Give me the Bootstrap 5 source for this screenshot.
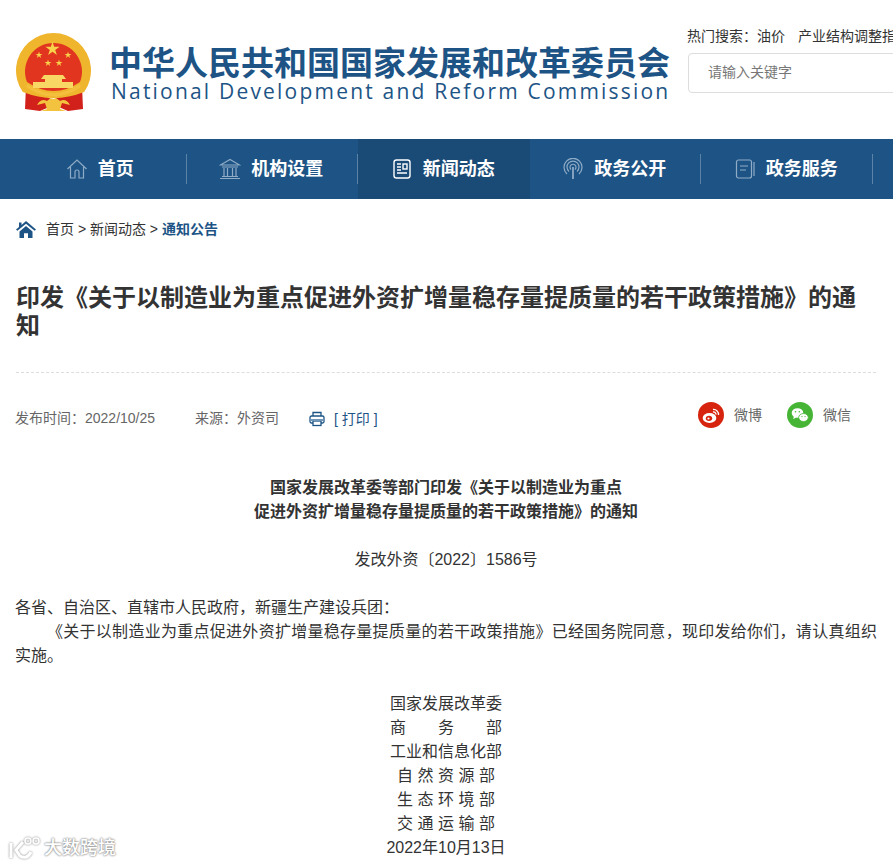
<!DOCTYPE html>
<html lang="zh-CN">
<head>
    <meta charset="UTF-8">
    <meta name="viewport" content="width=device-width, initial-scale=1.0">
    <title>印发《关于以制造业为重点促进外资扩增量稳存量提质量的若干政策措施》的通知</title>
    <link href="https://cdn.jsdelivr.net/npm/bootstrap@5.3.3/dist/css/bootstrap.min.css" rel="stylesheet">
    <style>
        html, body { height: 865px; overflow: hidden; }
        body {
            font-family: "Liberation Sans", "Noto Sans CJK SC", sans-serif;
            color: #333;
            font-size: 16px;
            line-height: 24px;
            position: relative;
        }
        /* top header */
        .site-head { height: 139px; padding-left: 15px; }
        .emblem { width: 76px; height: 80px; margin: 32px 0 0 1px; flex: none; }
        .site-name { margin-left: 17px; margin-top: 47px; width: 564px; flex: none; color: #1d5485; }
        .site-cn { font-size: 33px; line-height: 34px; font-weight: 700; white-space: nowrap; }
        .site-en { font-family: "Open Sans", sans-serif; font-size: 21px; line-height: 18px; letter-spacing: 2.2px; white-space: nowrap; margin-left: 2px; margin-top: 1px; }
        .site-search { margin-left: 14px; width: 320px; flex: none; padding-top: 24px; }
        .hot-words { font-size: 14px; line-height: 24px; white-space: nowrap; }
        .hot-words span { margin-right: 13px; }
        .search-box { margin: 5px 0 0 1px; height: 40px; font-size: 14px; padding: 0 0 2px 19px; border-color: #ddd; border-radius: 4px; font-family: inherit; }
        .search-box::placeholder { color: #777; }
        /* main nav */
        .main-nav { height: 60px; background: #1d5485; padding-left: 15px; }
        .nav-cell { width: 171.5px; flex: none; height: 60px; position: relative; color: #fff; font-size: 18px; font-weight: 700; gap: 10px; padding-right: 2px; }
        .nav-cell svg { width: 22px; height: 22px; flex: none; color: #8fabc6; }
        .nav-cell::after { content: ""; position: absolute; right: 0; top: 15px; height: 30px; width: 1px; background: #5b83a8; }
        .nav-cell.on { background: #1a4a76; }
        .nav-cell.on svg { color: #fff; }
        .nav-cell.on::after { display: none; }
        /* article */
        .crumbs { padding: 18px 15px 0; height: 60px; font-size: 14px; gap: 10px; }
        .crumbs > div { height: 24px; }
        .crumbs b { color: #1d5485; }
        .crumbs svg { width: 20px; height: 17px; flex: none; margin: 4px 0 0 1px; }
        .doc-title { font-size: 24px; line-height: 28px; font-weight: 700; margin: 25px 17px 0 16px; height: 89px; border-bottom: 1px dashed #ddd; color: #333; }
        .doc-meta { padding: 33px 15px 0; height: 103px; font-size: 14px; color: #666; align-items: flex-start; }
        .doc-print { color: #1d5485; gap: 9px; margin-left: 30px; margin-top: 1px; }
        .doc-share { margin-left: auto; margin-right: 27px; margin-top: -4px; gap: 25px; }
        .doc-share > span { gap: 10px; }
        .doc-share svg { width: 26px; height: 26px; flex: none; }
        .doc-body { padding: 0 16px 0 15px; }
        .doc-body p { margin: 0; }
        .gap-line { height: 24px; }
        .doc-indent { text-indent: 32px; text-align: justify; }
        /* watermark */
        .mark-logo { position: absolute; left: 8px; bottom: 4px; gap: 2px; color: #fff; font-size: 18px; font-weight: 500; text-shadow: 0 0 2px #888, 0 0 2px #888; }
        .mark-logo svg { width: 34px; height: 26px; filter: drop-shadow(0 0 1px #888); }
    </style>
</head>
<body>
    <!-- header -->
    <header class="site-head d-flex overflow-hidden">
        <svg class="emblem" viewBox="0 0 76 80" role="img" aria-label="国徽">
            <path d="M10 54 L37 68 L66 54 L67 77 L52 79 L38 73 L24 79 L9 77 Z" fill="#d2201a"/>
            <path d="M6.8 60 A37.5 37.5 0 1 1 68.2 60 Q37.5 72 6.8 60 Z" fill="#efb52d"/>
            <path d="M11 50 A28.5 28.5 0 1 1 64 50 Q37.5 68 11 50 Z" fill="#e2351f"/>
            <path d="M11.5 52 Q37.5 70 63.5 52 L65 55 Q37.5 74 10 55 Z" fill="#f3bf3c"/>
            <path d="M21 73 Q25 66 31 69 Q35 65 37.5 67 Q40 65 44 69 Q50 66 54 73 L46 71 L44 77 L50 79 H25 L31 77 L29 71 Z" fill="#f3c23f"/>
            <g fill="#f8d24a">
                <path transform="translate(36.5 17) scale(7.5)" d="M0-1 .22-.31 .95-.31 .36.12 .59.81 0 .38 -.59.81 -.36.12 -.95-.31 -.22-.31Z"/>
                <path transform="translate(23 23) scale(3.6)" d="M0-1 .22-.31 .95-.31 .36.12 .59.81 0 .38 -.59.81 -.36.12 -.95-.31 -.22-.31Z"/>
                <path transform="translate(52 23) scale(3.6)" d="M0-1 .22-.31 .95-.31 .36.12 .59.81 0 .38 -.59.81 -.36.12 -.95-.31 -.22-.31Z"/>
                <path transform="translate(32 31) scale(3.6)" d="M0-1 .22-.31 .95-.31 .36.12 .59.81 0 .38 -.59.81 -.36.12 -.95-.31 -.22-.31Z"/>
                <path transform="translate(43 31) scale(3.6)" d="M0-1 .22-.31 .95-.31 .36.12 .59.81 0 .38 -.59.81 -.36.12 -.95-.31 -.22-.31Z"/>
            </g>
            <path d="M28 43 H47 L50 47 H46 V50 H57 V56 H17 V50 H29 V47 H25 Z" fill="#f8d765"/>
        </svg>
        <div class="site-name">
            <div class="site-cn">中华人民共和国国家发展和改革委员会</div>
            <div class="site-en">National Development and Reform Commission</div>
        </div>
        <div class="site-search">
            <div class="hot-words"><span>热门搜索：油价</span>产业结构调整指导目录</div>
            <input class="form-control search-box" type="text" placeholder="请输入关键字">
        </div>
    </header>

    <!-- main nav -->
    <nav class="main-nav d-flex">
        <div class="nav-cell d-flex align-items-center justify-content-center">
            <svg viewBox="0 0 22 22" fill="none" stroke="currentColor" stroke-width="1.2"><path d="M1.5 11 L11 2 L20.5 11 M4.5 9 V20 H9 V14 A2 2 0 0 1 13 14 V20 H17.5 V9"/></svg>
            <span>首页</span>
        </div>
        <div class="nav-cell d-flex align-items-center justify-content-center">
            <svg viewBox="0 0 22 22" fill="none" stroke="currentColor" stroke-width="1.2"><path d="M1.5 7 L11 1.5 L20.5 7 Z M3 9 H19 M5 10 V18 M8.5 10 V18 M13.5 10 V18 M17 10 V18 M3 18.5 H19 M1 20.5 H21"/></svg>
            <span>机构设置</span>
        </div>
        <div class="nav-cell on d-flex align-items-center justify-content-center">
            <svg viewBox="0 0 22 22" fill="none" stroke="currentColor" stroke-width="1.4"><rect x="3" y="2" width="16" height="18" rx="2.5"/><path d="M6 6 H10 M6 9 H10 M6 12 H10 M6 15 H16"/><rect x="12" y="6" width="4" height="5"/></svg>
            <span>新闻动态</span>
        </div>
        <div class="nav-cell d-flex align-items-center justify-content-center">
            <svg viewBox="0 0 22 22" fill="none" stroke="currentColor" stroke-width="1.2"><path d="M5 16 A9 9 0 1 1 17 16 M7 13.5 A6 6 0 1 1 15 13.5 M9 11.5 A3 3 0 1 1 13 11.5"/><path d="M11 9 V21" stroke-width="1.8"/></svg>
            <span>政务公开</span>
        </div>
        <div class="nav-cell d-flex align-items-center justify-content-center">
            <svg viewBox="0 0 22 22" fill="none" stroke="currentColor" stroke-width="1.2"><rect x="2.5" y="2" width="15" height="18" rx="2"/><path d="M6 8 H14 M6 12 H12 M20 4 V18"/></svg>
            <span>政务服务</span>
        </div>
    </nav>

    <!-- breadcrumb -->
    <div class="crumbs d-flex">
        <svg viewBox="0 0 20 18" preserveAspectRatio="none"><path d="M10 0 L20 9 L18.6 10.4 L10 3 L1.4 10.4 L0 9 L3 6.4 V1.5 H5.5 V4.2 Z M3.5 11 L10 5.4 L16.5 11 V18 H12 V13 H8 V18 H3.5 Z" fill="#1d5485"/></svg>
        <div>首页 &gt; 新闻动态 &gt; <b>通知公告</b></div>
    </div>

    <h1 class="doc-title">印发《关于以制造业为重点促进外资扩增量稳存量提质量的若干政策措施》的通知</h1>

    <!-- meta row -->
    <div class="doc-meta d-flex">
        <span>发布时间：2022/10/25</span>
        <span class="ms-4 ps-3">来源：外资司</span>
        <span class="doc-print d-flex align-items-center">
            <svg width="16" height="16" viewBox="0 0 16 16" fill="none" stroke="#1d5485" stroke-width="1.3"><path d="M4 5 V1.5 H12 V5"/><rect x="1" y="5" width="14" height="7" rx="1.5"/><rect x="4" y="10" width="8" height="4.5" fill="#fff"/><path d="M1.5 9 H14.5" stroke="#6f95b8" stroke-width="2"/></svg>
            <span>[ 打印 ]</span>
        </span>
        <div class="doc-share d-flex">
            <span class="d-flex align-items-center">
                <svg viewBox="0 0 26 26"><circle cx="13" cy="13" r="13" fill="#d6240f"/><ellipse cx="11.5" cy="16" rx="6.8" ry="5" fill="#fff"/><ellipse cx="11" cy="16.3" rx="3.2" ry="2.6" fill="#d6240f"/><circle cx="10.5" cy="16.5" r="1.1" fill="#fff"/><path d="M15 7.5 A5 5 0 0 1 20.5 13 M15 10 A2.5 2.5 0 0 1 18 12.6" fill="none" stroke="#fff" stroke-width="1.3"/></svg>
                <span>微博</span>
            </span>
            <span class="d-flex align-items-center">
                <svg viewBox="0 0 26 26"><circle cx="13" cy="13" r="13" fill="#46b535"/><ellipse cx="10.5" cy="11" rx="5.8" ry="4.8" fill="#fff"/><path d="M7 14.5 L6 17 L9.5 15.5 Z" fill="#fff"/><ellipse cx="16.5" cy="15.5" rx="4.8" ry="4" fill="#fff" stroke="#46b535" stroke-width=".8"/><circle cx="8.5" cy="9.8" r=".8" fill="#46b535"/><circle cx="12.3" cy="9.8" r=".8" fill="#46b535"/><circle cx="15" cy="14.6" r=".6" fill="#46b535"/><circle cx="18" cy="14.6" r=".6" fill="#46b535"/></svg>
                <span>微信</span>
            </span>
        </div>
    </div>

    <!-- article body -->
    <article class="doc-body">
        <p class="text-center fw-bold">国家发展改革委等部门印发《关于以制造业为重点<br>促进外资扩增量稳存量提质量的若干政策措施》的通知</p>
        <div class="gap-line"></div>
        <p class="text-center">发改外资〔2022〕1586号</p>
        <div class="gap-line"></div>
        <p>各省、自治区、直辖市人民政府，新疆生产建设兵团：</p>
        <p class="doc-indent">《关于以制造业为重点促进外资扩增量稳存量提质量的若干政策措施》已经国务院同意，现印发给你们，请认真组织实施。</p>
        <div class="gap-line"></div>
        <p class="text-center">国家发展改革委</p>
        <p class="text-center">商&emsp;&emsp;务&emsp;&emsp;部</p>
        <p class="text-center">工业和信息化部</p>
        <p class="text-center">自 然 资 源 部</p>
        <p class="text-center">生 态 环 境 部</p>
        <p class="text-center">交 通 运 输 部</p>
        <p class="text-center">2022年10月13日</p>
    </article>

    <!-- watermark over the page -->
    <div class="mark-logo d-flex align-items-center">
        <svg viewBox="0 0 34 26" fill="none" stroke="#fff" stroke-width="3"><path d="M3 8 V23 M15 7 L8 15 L12 21 Q19 25 23 17"/><circle cx="20" cy="6" r="3" stroke-width="1.6"/><circle cx="28" cy="6" r="3" stroke-width="1.6"/></svg>
        <span>大数跨境</span>
    </div>

    <script src="https://cdn.jsdelivr.net/npm/bootstrap@5.3.3/dist/js/bootstrap.bundle.min.js"></script>
</body>
</html>
